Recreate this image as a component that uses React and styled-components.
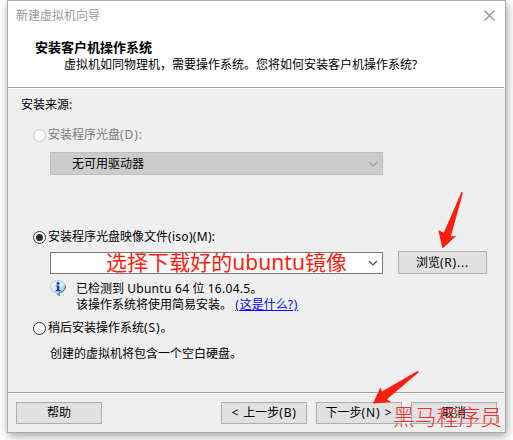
import React from "react";
import styled, { createGlobalStyle } from "styled-components";

const GlobalStyle = createGlobalStyle`
  body {
    margin: 0;
    background: #fff;
    overflow: hidden;
    color: #000;
    font: 12px/20px "Noto Sans", "Noto Sans CJK SC", sans-serif;
  }
  *, *::before { box-sizing: border-box; }
`;

const Screen = styled.div`
  position: relative;
  width: 513px;
  height: 440px;
  padding-left: 7px;
  overflow: hidden;
`;

const Dialog = styled.main`
  display: flex;
  flex-direction: column;
  width: 499px;
  height: 433px;
  border: 1px solid #a9a9a9;
  background: #efefef;
  box-shadow: 1px 3px 9px rgba(0, 0, 0, 0.36);
  white-space: nowrap;
`;

const TitleBar = styled.header`
  display: flex;
  align-items: center;
  justify-content: space-between;
  height: 29px;
  padding: 0 10px 0 8px;
  background: #fff;
  color: #999;
`;

const Intro = styled.section`
  height: 57px;
  padding: 7px 0 0 27px;
  background: #fff;
`;

const Heading = styled.h1`
  margin: 0;
  font-size: 13px;
  line-height: 20px;
  font-weight: 700;
`;

const Subheading = styled.p`
  margin: -2px 0 0 29px;
`;

const Divider = styled.div`
  height: 2px;
  margin-right: 1px;
  border-top: 1px solid #a0a0a0;
  background: #fff;
`;

const Body = styled.section`
  flex: 1;
  padding: 6px 0 0 13px;
`;

const RadioRow = styled.div`
  display: flex;
  align-items: center;
  gap: 2px;
  height: 20px;
  margin: ${(p) => p.$top}px 0 0 12px;
  color: ${(p) => (p.$disabled ? "#7a7a7a" : "#000")};
`;

const Radio = styled.span`
  display: grid;
  place-items: center;
  width: 13px;
  height: 13px;
  border: 1px solid ${(p) => (p.$disabled ? "#c4c4c4" : "#333")};
  border-radius: 50%;
  background: #fff;
  &::before {
    content: "";
    width: 7px;
    height: 7px;
    border-radius: 50%;
    background: ${(p) => (p.$checked ? "#2b2b2b" : "transparent")};
  }
`;

const Latin = styled.span`
  letter-spacing: ${(p) => p.$spacing}px;
`;

const FieldRow = styled.div`
  display: flex;
  align-items: center;
  gap: 15px;
  height: 23px;
  margin: ${(p) => p.$top}px 0 0 29px;
`;

const Select = styled.div`
  display: flex;
  align-items: center;
  justify-content: space-between;
  width: 333px;
  height: ${(p) => (p.$disabled ? 23 : 22)}px;
  padding: 0 4px 0 ${(p) => (p.$disabled ? 21 : 55)}px;
  border: 1px solid ${(p) => (p.$disabled ? "#bfbfbf" : "#7a7a7a")};
  background: ${(p) => (p.$disabled ? "#ccc" : "#fff")};
  color: ${(p) => (p.$disabled ? "#a0a0a0" : "#505050")};
`;

const SelectText = styled.span`
  color: #000;
`;

const RedNote = styled.span`
  color: #ff1c0d;
  font-size: 21px;
  line-height: 20px;
  letter-spacing: 0.05px;
  margin-top: -1px;
`;

const Button = styled.button`
  display: flex;
  align-items: center;
  justify-content: center;
  width: ${(p) => (p.$wide ? 89 : 86)}px;
  height: ${(p) => (p.$wide ? 23 : 22)}px;
  padding: 0;
  border: 1px solid #adadad;
  background: #e1e1e1;
  color: #000;
  font: inherit;
  line-height: 20px;
  white-space: pre;
`;

const Detected = styled.div`
  display: flex;
  gap: 10px;
  height: 32px;
  margin: 6px 0 0 29px;
  line-height: 16px;
`;

const DetectedText = styled.div`
  padding-top: 1px;
`;

const Link = styled.a`
  color: #00f;
  text-decoration: underline;
`;

const Hint = styled.p`
  margin: 6px 0 0 29px;
`;

const Footer = styled.footer`
  display: flex;
  gap: 9px;
  height: 38px;
  padding: 8px 8px 0;
`;

const Spacer = styled.div`
  flex: 1;
`;

const Annotations = styled.svg`
  position: absolute;
  inset: 0;
  pointer-events: none;
`;

const Watermark = styled.div`
  position: absolute;
  left: 393px;
  top: 402px;
  color: #fa2a2a;
  font-size: 21.8px;
  line-height: 30px;
  font-weight: 300;
  white-space: nowrap;
`;

const Chevron = () => (
  <svg width="10" height="6" viewBox="0 0 10 6" fill="none" stroke="currentColor" strokeWidth="1.2">
    <path d="M1 1 5 5 9 1" />
  </svg>
);

const CloseIcon = () => (
  <svg width="11" height="11" viewBox="0 0 11 11" stroke="#8c8c8c" strokeWidth="1.1">
    <path d="M.5.5l10 10M10.500.5l-10 10" />
  </svg>
);

const InfoIcon = () => (
  <svg width="16" height="16" viewBox="0 0 16 16">
    <defs>
      <linearGradient id="bubble" x1="0" y1="0" x2="1" y2="1">
        <stop offset="0" stopColor="#fff" />
        <stop offset=".5" stopColor="#d9e8f8" />
        <stop offset="1" stopColor="#6f9fd4" />
      </linearGradient>
    </defs>
    <path
      d="M8 .5C3.800.5.5 3.200.5 6.700c0 3 2.400 5.400 5.600 6L9 15.600l.4-2.900c3.400-.5 6.100-2.900 6.100-6C15.500 3.200 12.200.5 8 .5Z"
      fill="url(#bubble)"
      stroke="#a3b8d0"
      strokeWidth=".8"
    />
    <path d="M15.300 5.500c.7 3.500-2.400 6.700-5.900 7.200L9 15.600l-2-2" fill="none" stroke="#41719f" strokeWidth="1" />
    <circle cx="8" cy="3.300" r="1.500" fill="#0b48a8" />
    <path d="M5.800 5.500h3.500v4.600h1.200v1.100H5.700v-1.100h1.200V6.600H5.800Z" fill="#0b48a8" />
  </svg>
);

export default function App() {
  return (
    <>
      <GlobalStyle />
      <Screen>
        <Dialog>
          <TitleBar>
            <span>新建虚拟机向导</span>
            <CloseIcon />
          </TitleBar>
          <Intro>
            <Heading>安装客户机操作系统</Heading>
            <Subheading>虚拟机如同物理机，需要操作系统。您将如何安装客户机操作系统?</Subheading>
          </Intro>
          <Divider />
          <Body>
            <div>安装来源:</div>
            <RadioRow $top={10} $disabled>
              <Radio $disabled />
              <span>安装程序光盘<Latin $spacing={0.9}>(D):</Latin></span>
            </RadioRow>
            <FieldRow $top={7}>
              <Select $disabled>
                <SelectText>无可用驱动器</SelectText>
                <Chevron />
              </Select>
            </FieldRow>
            <RadioRow $top={52}>
              <Radio $checked />
              <span>安装程序光盘映像文件<Latin $spacing={0.3}>(iso)(M):</Latin></span>
            </RadioRow>
            <FieldRow $top={4}>
              <Select>
                <RedNote>选择下载好的ubuntu镜像</RedNote>
                <Chevron />
              </Select>
              <Button $wide>浏览<Latin $spacing={0.8}>(R)...</Latin></Button>
            </FieldRow>
            <Detected>
              <InfoIcon />
              <DetectedText>
                <div>
                  已检测到 <Latin $spacing={0.3}>Ubuntu 64</Latin> 位 <Latin $spacing={0.3}>16.04.5</Latin>。
                </div>
                <div>
                  该操作系统将使用简易安装。 <Link><Latin $spacing={0.9}>(</Latin>这是什么<Latin $spacing={0.9}>?)</Latin></Link>
                </div>
              </DetectedText>
            </Detected>
            <RadioRow $top={6}>
              <Radio />
              <span>稍后安装操作系统<Latin $spacing={0.9}>(S)</Latin>。</span>
            </RadioRow>
            <Hint>创建的虚拟机将包含一个空白硬盘。</Hint>
          </Body>
          <Divider />
          <Footer>
            <Button>帮助</Button>
            <Spacer />
            <Button><Latin $spacing={0.9}>&lt; </Latin>上一步<Latin $spacing={0.7}>(B)</Latin></Button>
            <Button>下一步<Latin $spacing={0.9}>(N) &gt;</Latin></Button>
            <Button>取消</Button>
          </Footer>
        </Dialog>
        <Annotations width="513" height="440" fill="#ff1c0d">
          <path d="M461.500 192 463 192.500 450.800 236.500 456.300 235.700 442.500 248.500 438.300 230 443.800 232.700Z" />
          <path d="M417.500 371 419 372 387 399.300 391 402 373 403.500 380.300 387.500 382 391.500Z" />
        </Annotations>
        <Watermark>黑马程序员</Watermark>
      </Screen>
    </>
  );
}
